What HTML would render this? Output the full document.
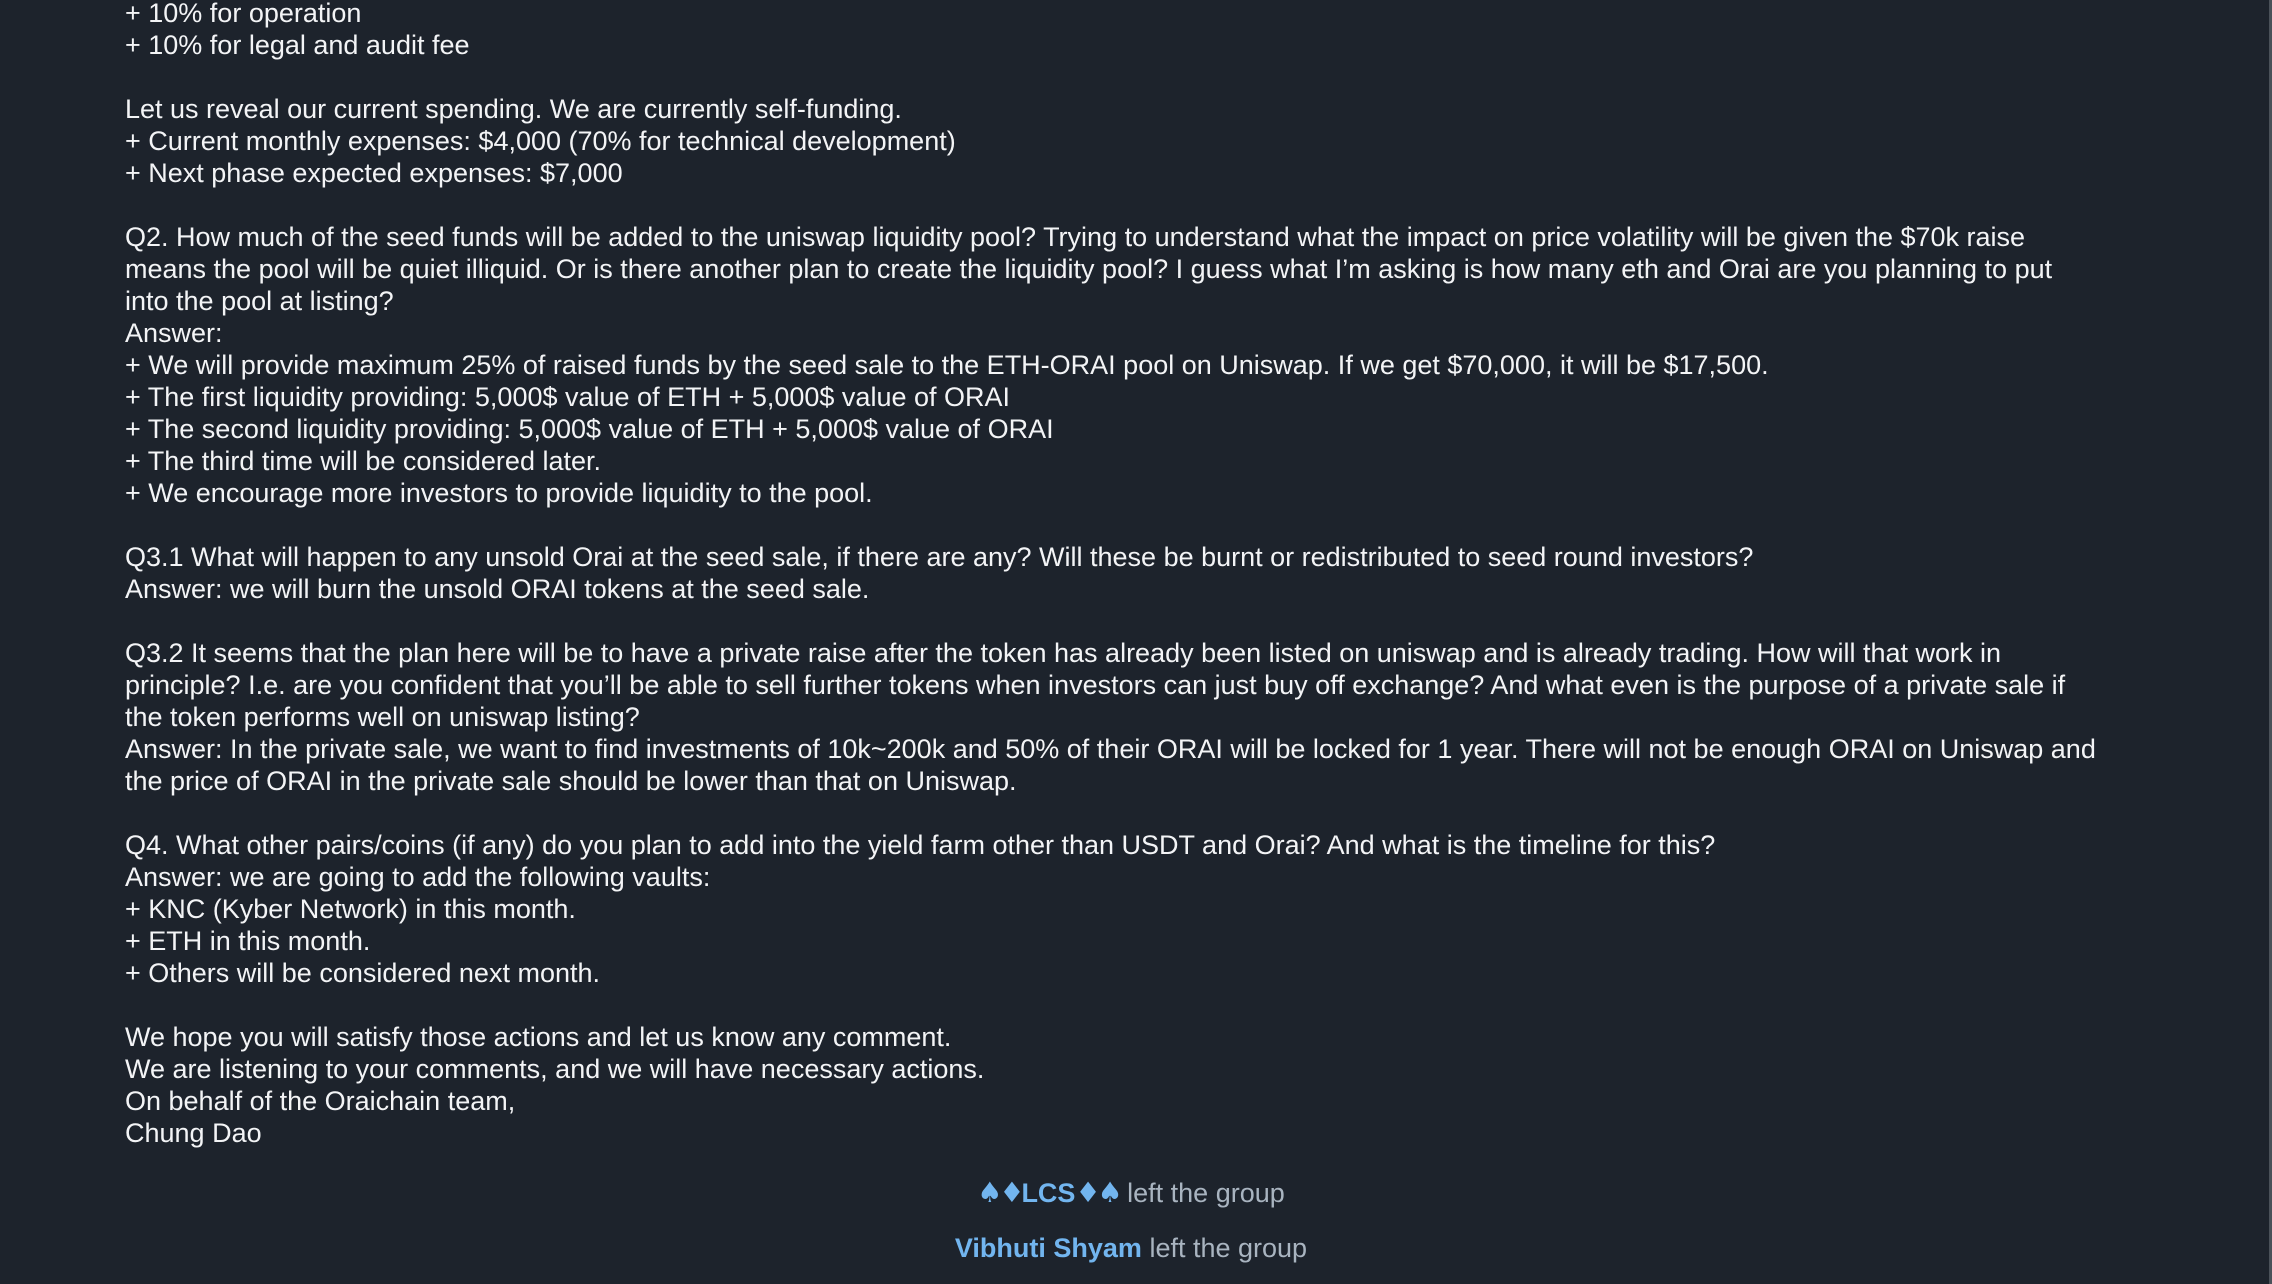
<!DOCTYPE html>
<html><head><meta charset="utf-8"><style>
html,body{margin:0;padding:0;width:2272px;height:1284px;overflow:hidden;background:#1d232c;}
body{position:relative;font-family:"Liberation Sans",sans-serif;}
.msg{position:absolute;left:125px;top:-3px;font-size:27px;line-height:32px;color:#f3f4f6;white-space:pre;}
.svc{position:absolute;left:0;width:2262px;text-align:center;font-size:27px;line-height:32px;color:#a9b4c0;}
.svc b{color:#72b5ef;}
.svc .s{font-size:28px;font-family:"DejaVu Sans",sans-serif;letter-spacing:-3px;}
.sb{position:absolute;right:0;top:0;width:3px;height:1284px;background:#4a5159;}
</style></head><body>
<div class="msg">+ 10% for operation
+ 10% for legal and audit fee

Let us reveal our current spending. We are currently self-funding.
+ Current monthly expenses: $4,000 (70% for technical development)
+ Next phase expected expenses: $7,000

Q2. How much of the seed funds will be added to the uniswap liquidity pool? Trying to understand what the impact on price volatility will be given the $70k raise
means the pool will be quiet illiquid. Or is there another plan to create the liquidity pool? I guess what I’m asking is how many eth and Orai are you planning to put
into the pool at listing?
Answer:
+ We will provide maximum 25% of raised funds by the seed sale to the ETH-ORAI pool on Uniswap. If we get $70,000, it will be $17,500.
+ The first liquidity providing: 5,000$ value of ETH + 5,000$ value of ORAI
+ The second liquidity providing: 5,000$ value of ETH + 5,000$ value of ORAI
+ The third time will be considered later.
+ We encourage more investors to provide liquidity to the pool.

Q3.1 What will happen to any unsold Orai at the seed sale, if there are any? Will these be burnt or redistributed to seed round investors?
Answer: we will burn the unsold ORAI tokens at the seed sale.

Q3.2 It seems that the plan here will be to have a private raise after the token has already been listed on uniswap and is already trading. How will that work in
principle? I.e. are you confident that you’ll be able to sell further tokens when investors can just buy off exchange? And what even is the purpose of a private sale if
the token performs well on uniswap listing?
Answer: In the private sale, we want to find investments of 10k~200k and 50% of their ORAI will be locked for 1 year. There will not be enough ORAI on Uniswap and
the price of ORAI in the private sale should be lower than that on Uniswap.

Q4. What other pairs/coins (if any) do you plan to add into the yield farm other than USDT and Orai? And what is the timeline for this?
Answer: we are going to add the following vaults:
+ KNC (Kyber Network) in this month.
+ ETH in this month.
+ Others will be considered next month.

We hope you will satisfy those actions and let us know any comment.
We are listening to your comments, and we will have necessary actions.
On behalf of the Oraichain team,
Chung Dao</div>
<div class="svc" style="top:1177px"><b><span class="s">♠♦</span>LCS<span class="s">♦♠</span></b> left the group</div>
<div class="svc" style="top:1232px"><b>Vibhuti Shyam</b> left the group</div>
<div class="sb"></div>
</body></html>
